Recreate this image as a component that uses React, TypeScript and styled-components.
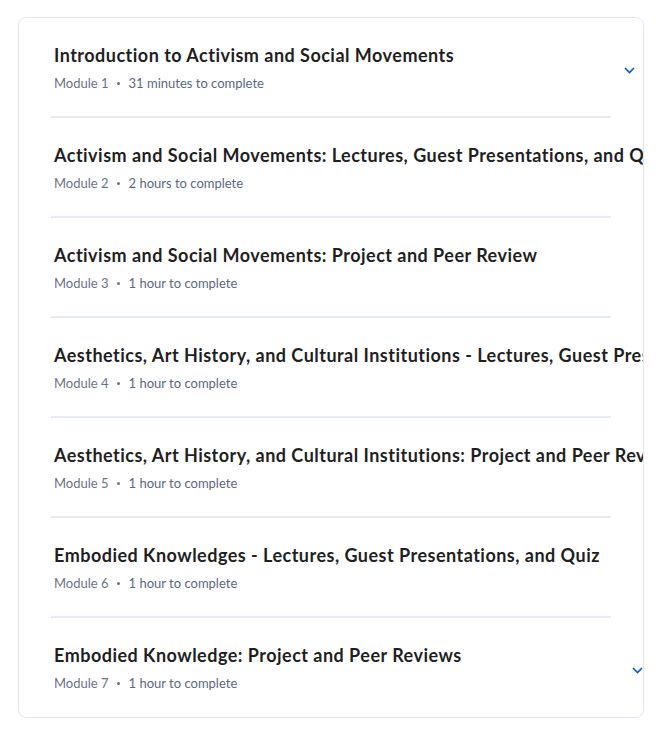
import React from "react";
import styled, { createGlobalStyle } from "styled-components";

const Global = createGlobalStyle`
  html, body { margin: 0; padding: 0; background: #ffffff; }
  body { font-family: "Source Sans Pro", Lato, "Noto Sans", sans-serif; }
`;

const Page = styled.div`
  padding: 17px 13px 12px 18px;
`;

const Card = styled.section`
  width: 624px;
  height: 699px;
  border: 1px solid #e1e7f2;
  border-radius: 8px;
  overflow: hidden;
  display: flex;
  flex-direction: column;
`;

const Item = styled.div`
  display: flex;
  flex-direction: column;
`;

const Header = styled.div`
  display: flex;
  align-items: center;
  gap: 170px;
  padding: 25px 0 23px 35px;
`;

const TextBlock = styled.div`
  display: flex;
  flex-direction: column;
  flex-shrink: 0;
`;

const Title = styled.h3`
  margin: 0;
  font-family: Lato, "Noto Sans", sans-serif;
  font-weight: 700;
  font-size: 18px;
  letter-spacing: 0.48px;
  line-height: 24px;
  color: #1f1f1f;
  white-space: nowrap;
`;

const Meta = styled.div`
  display: flex;
  align-items: center;
  margin-top: 6px;
  font-family: Lato, "Noto Sans", sans-serif;
  font-size: 13px;
  line-height: 20px;
  color: #5b6780;
  white-space: nowrap;
`;

const ModuleLabel = styled.span`
  color: #6a7386;
`;

const Dot = styled.span`
  width: 3px;
  height: 3px;
  border-radius: 50%;
  background: #6a7386;
  margin: 0 9px 0 8px;
`;

const Chevron = styled.svg`
  flex-shrink: 0;
  width: 11px;
  height: 7px;
  margin-top: 4px;
`;

const Divider = styled.hr`
  margin: 0 32px;
  border: none;
  height: 2px;
  background: #e6eaf2;
`;

const modules = [
  { title: "Introduction to Activism and Social Movements", duration: "31 minutes to complete" },
  { title: "Activism and Social Movements: Lectures, Guest Presentations, and Quiz", duration: "2 hours to complete" },
  { title: "Activism and Social Movements: Project and Peer Review", duration: "1 hour to complete" },
  { title: "Aesthetics, Art History, and Cultural Institutions - Lectures, Guest Presentations, and Quiz", duration: "1 hour to complete" },
  { title: "Aesthetics, Art History, and Cultural Institutions: Project and Peer Reviews", duration: "1 hour to complete" },
  { title: "Embodied Knowledges - Lectures, Guest Presentations, and Quiz", duration: "1 hour to complete" },
  { title: "Embodied Knowledge: Project and Peer Reviews", duration: "1 hour to complete" },
];

export default function App() {
  return (
    <Page>
      <Global />
      <Card>
        {modules.map((m, i) => (
          <Item key={i}>
            {i > 0 && <Divider />}
            <Header>
              <TextBlock>
                <Title>{m.title}</Title>
                <Meta>
                  <ModuleLabel>Module {i + 1}</ModuleLabel>
                  <Dot />
                  <span>{m.duration}</span>
                </Meta>
              </TextBlock>
              <Chevron viewBox="0 0 11 7" fill="none">
                <polyline points="1,1 5.5,5.5 10,1" stroke="#0056d2" strokeWidth="1.6" />
              </Chevron>
            </Header>
          </Item>
        ))}
      </Card>
    </Page>
  );
}
